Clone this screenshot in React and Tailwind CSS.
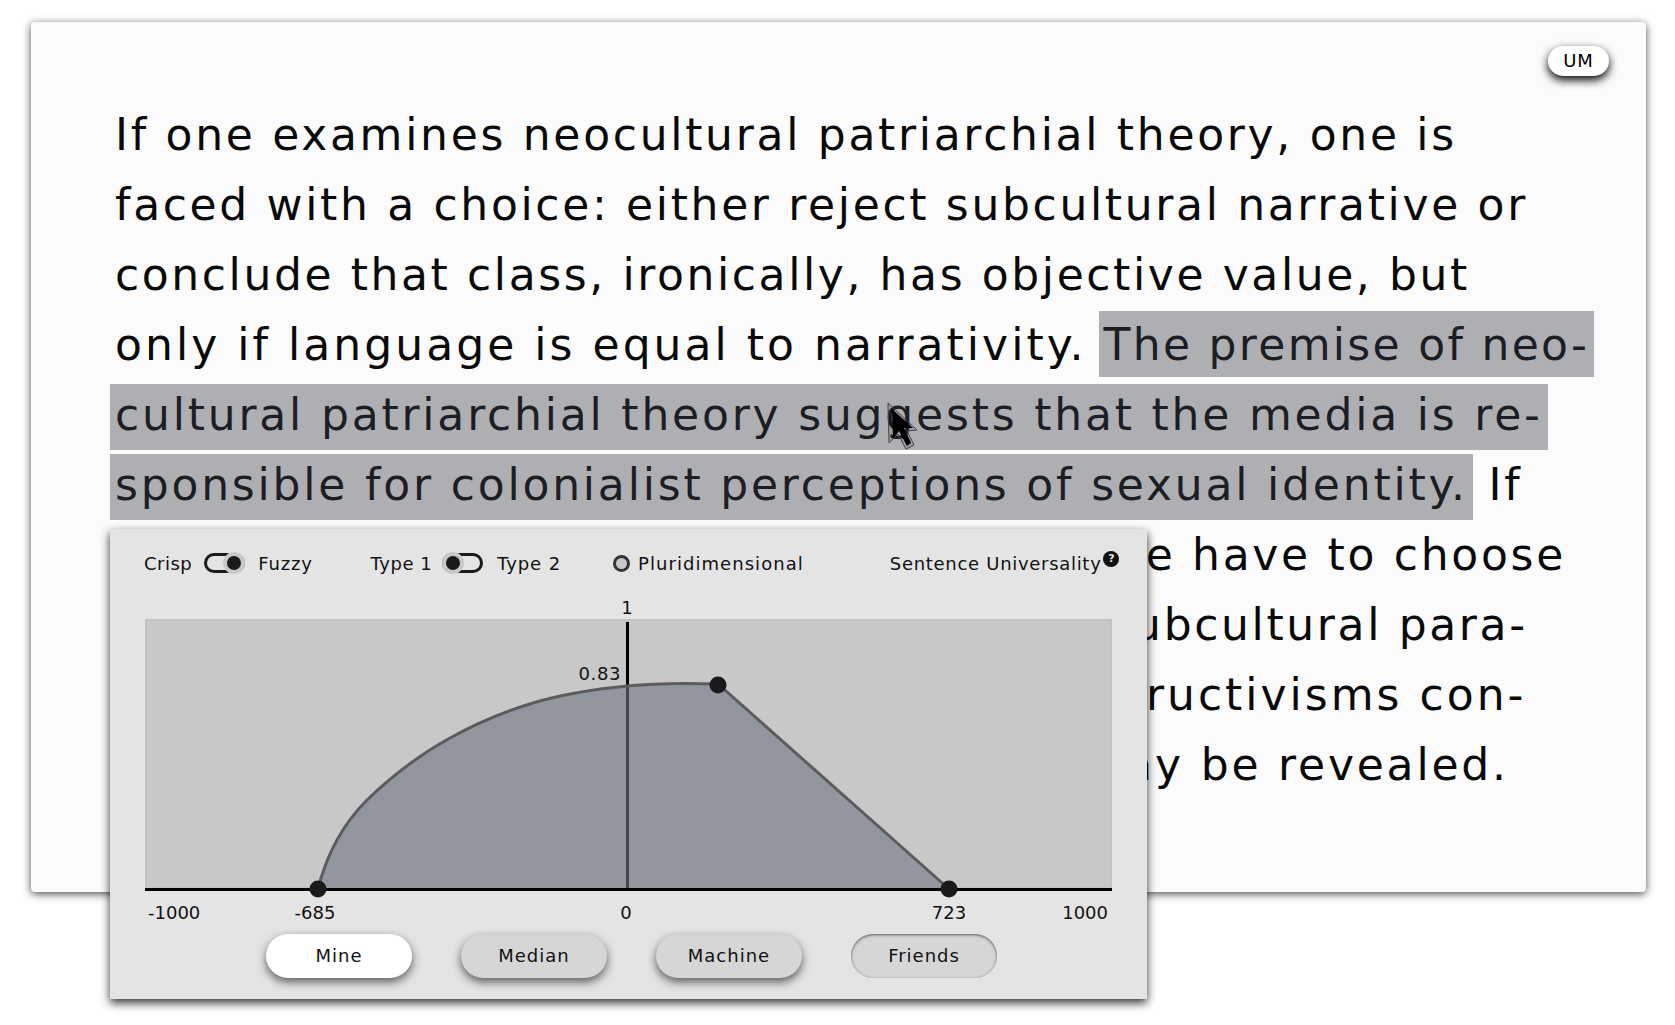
const FONT = "font-['DejaVu_Sans',sans-serif]";

const CURVE = 'M173 270 C183 230 200 203 222 181 C250 154 277 134.4 305 119 C333 103.6 360 92.4 388 84 C419 74.7 451 70 482 67 C512 64 543 64 573 65 L804 270';

function Toggle({ on }) {
  return (
    <div className={`flex h-[20px] w-[41px] items-center rounded-full border-[3px] border-[#1a1a1d] ${on ? 'justify-end' : 'justify-start'}`}>
      <div className={`h-[22px] w-[22px] shrink-0 rounded-full border-[4px] border-[#c8c8c8] bg-[#1a1a1d] ${on ? '-mr-[3px]' : '-ml-[3px]'}`} />
    </div>
  );
}

function PillButton({ label, className }) {
  return (
    <div className={`flex h-[44px] w-[146px] items-center justify-center rounded-full pb-[2px] text-[18px] tracking-[1px] text-[#111] ${className}`}>
      {label}
    </div>
  );
}

function Chart() {
  return (
    <div className="relative h-[270px] w-[967px] bg-[#c8c8c8] shadow-[inset_0_0_0_2px_#c2c2c2]">
      <svg className="absolute left-0 top-0 overflow-visible" width="967" height="270" viewBox="0 0 967 270">
        <line x1="482.5" y1="3" x2="482.5" y2="270" stroke="#000" strokeWidth="3" />
        <path d={`${CURVE} Z`} fill="rgba(110,118,131,0.6)" stroke="none" />
        <path d={CURVE} fill="none" stroke="#5c5c5e" strokeWidth="3" />
        <line x1="0" y1="270.5" x2="967" y2="270.5" stroke="#000" strokeWidth="3" />
        <circle cx="173" cy="270" r="8.5" fill="#1a1a1d" />
        <circle cx="573" cy="66" r="8.5" fill="#1a1a1d" />
        <circle cx="804" cy="270" r="8.5" fill="#1a1a1d" />
      </svg>
      <span className="absolute left-[482px] top-[-22px] -translate-x-1/2 text-[18px] leading-[22px]">1</span>
      <span className="absolute right-[491px] top-[44px] text-[18px] leading-[22px] tracking-[0.6px]">0.83</span>
      <span className="absolute left-[3px] top-[283px] text-[18px] leading-[22px]">-1000</span>
      <span className="absolute left-[170px] top-[283px] -translate-x-1/2 text-[18px] leading-[22px]">-685</span>
      <span className="absolute left-[481px] top-[283px] -translate-x-1/2 text-[18px] leading-[22px]">0</span>
      <span className="absolute left-[804px] top-[283px] -translate-x-1/2 text-[18px] leading-[22px]">723</span>
      <span className="absolute right-[4px] top-[283px] text-[18px] leading-[22px]">1000</span>
    </div>
  );
}

function Panel() {
  return (
    <div className="absolute left-[79px] top-[507px] h-[470px] w-[1037px] bg-[#e4e4e4] text-[#111] shadow-[0_4px_9px_rgba(0,0,0,0.8)]">
      <div className="flex h-[68px] items-center pl-[34px] text-[18px] tracking-[0.8px]">
        <span className="tracking-[0.5px]">Crisp</span>
        <div className="ml-[12px]"><Toggle on /></div>
        <span className="ml-[13px]">Fuzzy</span>
        <span className="ml-[58px] tracking-[0.5px]">Type 1</span>
        <div className="ml-[10px]"><Toggle /></div>
        <span className="ml-[14px] tracking-[0.9px]">Type 2</span>
        <div className="ml-[52px] h-[17px] w-[17px] rounded-full border-[3px] border-[#333] bg-[#c8c8c8]" />
        <span className="ml-[8px] tracking-[1.05px]">Pluridimensional</span>
        <span className="ml-[86px] tracking-[0.7px]">Sentence Universality</span>
        <div className="ml-[2px] mt-[-8px] flex h-[16px] w-[16px] items-center justify-center rounded-full bg-[#111] text-[11px] font-bold tracking-normal text-[#e4e4e4]">?</div>
      </div>
      <div className="ml-[35px] mt-[22px]"><Chart /></div>
      <div className="ml-[156px] mt-[45px] flex gap-[49px]">
        <PillButton label="Mine" className="bg-white shadow-[0_4px_10px_rgba(0,0,0,0.6)]" />
        <PillButton label="Median" className="bg-[#d6d6d6] shadow-[0_4px_10px_rgba(0,0,0,0.6)]" />
        <PillButton label="Machine" className="bg-[#d6d6d6] shadow-[0_4px_10px_rgba(0,0,0,0.6)]" />
        <PillButton label="Friends" className="bg-[#d6d6d6] shadow-[inset_0_1px_3px_rgba(0,0,0,0.6)]" />
      </div>
    </div>
  );
}

function Cursor() {
  return (
    <svg className="absolute left-[855px] top-[379px]" width="36" height="50" viewBox="0 0 36 50">
      <path d="M2 2 L3 42 L12 33 L20 48 L28 44 L21 30 L31 29 Z" fill="#000" fillOpacity="0.1" stroke="#444" strokeWidth="1" />
      <path d="M6 8 L7 38 L13 30 L21 45 L25 42 L18 27 L27 27 Z" fill="#000" />
    </svg>
  );
}

// leading sets where the box sits round the baseline, the boxes are not evenly spaced in the original
function Highlight({ className, children }) {
  return <span className={`inline-block h-[66px] bg-[#aeafb3] px-[5px] -mx-[5px] text-[#1d1e23] ${className}`}>{children}</span>;
}

export default function App() {
  return (
    <div className={`min-h-[1025px] bg-white pl-[31px] pt-[22px] ${FONT}`}>
      <div className="relative h-[870px] w-[1615px] rounded-[4px] bg-[#fbfbfb] pl-[84px] pt-[78px] shadow-[0_2px_8px_rgba(0,0,0,0.7)]">
        <div className="absolute left-[1517px] top-[24px] flex h-[30px] w-[61px] items-center justify-center rounded-full bg-white pb-[1px] text-[18px] tracking-[1px] shadow-[0_4px_10px_rgba(0,0,0,1)]">UM</div>
        <div className="whitespace-nowrap text-[44px] leading-[70px] tracking-[2.7px] text-[#0a0a0a]">
          <div className="h-[70px]">If one examines neocultural patriarchial theory, one is</div>
          <div className="h-[70px] tracking-[2.66px]">faced with a choice: either reject subcultural narrative or</div>
          <div className="h-[70px] tracking-[2.6px]">conclude that class, ironically, has objective value, but</div>
          <div className="h-[70px] tracking-[3.04px]">only if language is equal to narrativity. <Highlight className="leading-[68px] tracking-[2.3px]">The premise of neo-</Highlight></div>
          <div className="h-[70px]"><Highlight className="leading-[62px] tracking-[2.8px]">cultural patriarchial theory suggests that the media is re-</Highlight></div>
          <div className="h-[70px]"><Highlight className="leading-[62px] tracking-[2.8px]">sponsible for colonialist perceptions of sexual identity.</Highlight> <span className="ml-[4px]">If</span></div>
          <div className="h-[70px]">the textual paradigm of contexts holds, we have to choose</div>
          <div className="h-[70px] tracking-[2.64px]">between the neodialectic paradigm and subcultural para-</div>
          <div className="h-[70px] tracking-[3px]">digm of context. Thus, a number of constructivisms con-</div>
          <div className="h-[70px] tracking-[2.81px]">cerning the social role of the observer may be revealed.</div>
        </div>
        <Panel />
        <Cursor />
      </div>
    </div>
  );
}
